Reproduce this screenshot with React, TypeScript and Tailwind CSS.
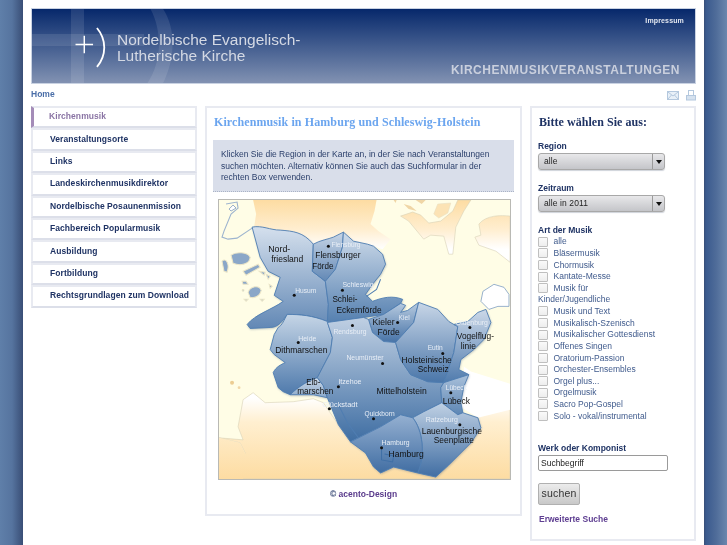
import React from "react";

const nav = ["Kirchenmusik","Veranstaltungsorte","Links","Landeskirchenmusikdirektor","Nordelbische Posaunenmission","Fachbereich Popularmusik","Ausbildung","Fortbildung","Rechtsgrundlagen zum Download"];
const checks: (string | null)[] = ["alle","Bläsermusik","Chormusik","Kantate-Messe","Musik für",null,"Musik und Text","Musikalisch-Szenisch","Musikalischer Gottesdienst","Offenes Singen","Oratorium-Passion","Orchester-Ensembles","Orgel plus...","Orgelmusik","Sacro Pop-Gospel","Solo - vokal/instrumental"];

const black: [string, number, number, number][] = [
  ["Nord-",268,250,22],["friesland",271,260,32],["Flensburger",315,256,45],["Förde",312,267,21],["Schlei-",332,300,25],["Eckernförde",336,311,45],
  ["Kieler",372,323,22],["Förde",377,333,22],["Vogelflug-",456,337,37],["linie",460,346,15],["Dithmarschen",275,350,52],["Elb-",306,382,14],["marschen",297,391,36],
  ["Holsteinische",401,360,50],["Schweiz",417,369,31],["Mittelholstein",376,391,50],["Lübeck",442,401,27],["Lauenburgische",421,431,60],["Seenplatte",433,440,40],["Hamburg",388,454,35],
];
const white: [string, number, number, number][] = [
  ["Flensburg",331,245,29],["Husum",295,291,21],["Schleswig",342,285,31],["Rendsburg",333,332,33],["Heide",298,339,18],["Kiel",398,318,11],["Oldenburg",455,323,32],
  ["Itzehoe",338,382,23],["Glückstadt",322,405,35],["Neumünster",346,358,37],["Eutin",427,348,15],["Lübeck",445,388,21],["Quickborn",364,414,30],["Ratzeburg",425,420,32],["Hamburg",381,443,28],
];
const dots: [number, number][] = [[328,247],[294,296],[342,291],[352,326],[298,343],[397,323],[469,328],[338,387],[329,409],[382,364],[442,354],[450,393],[373,419],[459,425],[381,448]];

const regions: [string, string, string][] = [
  ["M252,228 C262,226 270,231 280,231 C293,232 303,233 313,245 L312,272 L325,282 L328,305 L327,322 C312,316 300,315 287,315 C282,322 278,328 270,328 L250,329 L247,325 C255,315 272,310 283,302 L274,296 L280,278 L268,272 L260,258 Z", "#d5e0ed", "#6288b5"],
  ["M313,245 C320,241 328,240 333,238 L343,233 L342,248 L335,270 L325,282 L312,272 Z", "#c8d6e7", "#6288b5"],
  ["M343,233 L353,242 L367,245 L373,247 L382,255 L385,265 L380,275 L372,285 L365,295 L372,302 C382,298 392,296 402,300 L400,304 L383,315 L363,318 L327,323 L328,305 L325,282 L335,270 L342,248 Z", "#cedbea", "#5580b0"],
  ["M368,320 L383,315 L400,304 L405,306 L400,313 L407,311 L418,303 L413,323 L395,343 L383,342 L372,333 Z", "#b8cbe0", "#4773a7"],
  ["M287,315 C300,315 312,316 327,322 L332,338 L330,353 L317,378 C308,381 298,387 290,395 L283,392 L278,388 L273,373 C276,367 281,365 285,363 L274,355 L270,350 L274,335 L278,328 C282,326 284,320 287,315 Z", "#c5d5e6", "#4f7aac"],
  ["M290,395 C298,387 308,381 317,378 L323,386 L327,398 L313,395 Z", "#ccd9e9", "#8aa9ca"],
  ["M327,323 L363,318 L368,320 L372,333 L383,342 L395,343 L400,360 L410,375 L427,382 L443,383 L440,388 L441,403 L423,412 L412,418 L400,415 L380,427 L358,438 L350,442 L338,425 L327,398 L323,386 L317,378 L330,353 L332,338 Z", "#c0d0e3", "#3f6ea3"],
  ["M418,303 L437,310 L448,322 L453,325 L457,327 L453,353 L443,383 L427,382 L410,375 L400,360 L395,343 L413,323 Z", "#c8d6e7", "#4a76a9"],
  ["M453,325 L467,322 L477,313 L485,310 L490,323 L483,340 L473,350 L460,360 L458,370 L468,375 L443,383 L453,353 L457,327 Z", "#cbd8e8", "#507bad"],
  ["M443,383 L468,375 L463,387 L460,403 L462,413 L457,415 L441,403 L440,388 Z", "#a9c0da", "#5d86b4"],
  ["M412,418 L423,412 L441,403 L457,415 L462,413 L477,418 L480,428 L470,443 L448,465 L435,477 L417,473 C425,455 422,430 412,418 Z", "#c0d1e4", "#416ea3"],
  ["M358,438 L380,427 L400,415 L412,418 C422,430 425,455 417,473 L393,467 L380,473 L373,467 L365,453 L350,442 Z", "#95b0d1", "#416ea3"],
];

function MapArt() {
  return (
    <svg viewBox="219 201 290 278" className="block h-full w-full">
      <defs>
        {regions.map(([, a, b], i) => (
          <linearGradient key={i} id={`r${i}`} x1="0" y1="0" x2="0" y2="1">
            <stop offset="0" stopColor={a} />
            <stop offset="1" stopColor={b} />
          </linearGradient>
        ))}
        <linearGradient id="top" gradientUnits="userSpaceOnUse" x1="0" y1="201" x2="0" y2="250">
          <stop offset="0" stopColor="#fddca2" />
          <stop offset="0.6" stopColor="#ffeed0" />
          <stop offset="1" stopColor="#ffffff" />
        </linearGradient>
        <linearGradient id="bot" gradientUnits="userSpaceOnUse" x1="0" y1="398" x2="0" y2="479">
          <stop offset="0" stopColor="#ffffff" />
          <stop offset="0.3" stopColor="#ffefd0" />
          <stop offset="1" stopColor="#fddca2" />
        </linearGradient>
        <filter id="sh" x="-5%" y="-5%" width="110%" height="110%" colorInterpolationFilters="sRGB">
          <feGaussianBlur stdDeviation="1.3" />
        </filter>
      </defs>
      <rect x="219" y="201" width="290" height="278" fill="#fffde6" />
      <path d="M253,201 L256,215 L254,228 L280,231 L313,245 L333,238 L343,233 L353,242 L367,245 L382,250 L390,240 L378,232 L370,225 L374,212 L376,201 Z" fill="url(#top)" />
      <path d="M400,217 L408,222 L423,240 L430,236 L443,237 L448,255 L452,255 L455,228 L463,212 L470,201 L457,201 L452,212 L440,222 L428,224 L420,216 L412,213 Z" fill="url(#top)" stroke="#d8d2b8" strokeWidth="0.6" />
      <path d="M433,215 L437,205 L450,204 L447,214 L438,219 Z" fill="#fce3b5" stroke="#e5dcc0" strokeWidth="0.5" />
      <path d="M403,205 L410,207 L416,212 L408,210 Z M393,201 L396,201 L395,204 Z M415,201 L425,201 L421,205 Z" fill="#f0d6a6" />
      <path d="M478,225 C485,216 500,216 509,217 L509,263 L495,252 L478,246 L474,238 L480,236 Z" fill="url(#top)" stroke="#d8d2b8" strokeWidth="0.6" />
      <path d="M226,205 L237,203 L238,209 L231,215 L224,232 L222,238 L228,240 L237,239 L252,229" fill="none" stroke="#9db4cf" strokeWidth="1.1" />
      <path d="M233,206 L229,210 L231,212 L236,209 Z" fill="#fff" stroke="#7f9bbd" strokeWidth="0.8" />
      <g fill="#8ba7c8" stroke="#ece6c8" strokeWidth="1">
        <path d="M231,256 C236,252 248,253 250,258 C250,265 240,267 233,264 Z" />
        <path d="M222,262 C226,258 230,265 227,273 L224,272 Z" />
        <path d="M248,293 C250,287 259,285 261,291 C260,297 254,299 250,298 Z" />
        <path d="M243,272 L258,265 L260,268 L246,276 Z" />
        <path d="M242,282 L246,282 L248,285 L243,285 Z" />
        <path d="M259,272 L265,273 L264,276 Z" />
        <path d="M266,275 L270,277 L268,280 Z" />
        <path d="M269,285 L272,287 L270,289 Z" />
        <path d="M244,300 L248,300 L246,302 Z" />
        <path d="M260,300 L264,300 L262,302 Z" />
        <circle cx="243" cy="291" r="0.9" />
      </g>
      <path d="M480,302 L482,292 L493,285 L503,288 L508,295 L508,307 L497,307 L488,310 Z" fill="url(#top)" stroke="#7f9fc2" strokeWidth="0.8" />
      <path d="M219,438 L240,443 L245,453 L238,470 L237,479 L509,479 L509,405 L480,415 L477,418 L480,428 L470,443 L448,465 L435,477 L417,473 L393,467 L380,473 L373,467 L365,453 L350,442 L338,425 L323,403 L313,399 L293,402 L265,403 L253,393 L243,400 L238,427 L243,440 Z" fill="url(#bot)" stroke="#d8d2b8" strokeWidth="0.6" />
      <path d="M463,367 L470,372 L490,378 L509,384 L509,410 L477,418 L460,407 L463,387 Z" fill="#ffffff" />
      <path d="M219,438 L240,443 L245,453 L243,479 L219,479 Z" fill="url(#bot)" />
      <circle cx="232" cy="383" r="2" fill="#eccd93" />
      <circle cx="239" cy="388" r="1.4" fill="#f1d7a6" />
      <path d={regions.map((r) => r[0]).join(" ")} fill="#5b6f88" opacity="0.45" filter="url(#sh)" transform="translate(0.6,1)" />
      {regions.map(([d], i) => (
        <path key={i} d={d} fill={`url(#r${i})`} stroke="#4f7db1" strokeWidth="0.9" strokeLinejoin="round" />
      ))}
      <path d="M366,297 L376,290 L380,280 M337,403 L347,423 L358,438" stroke="#4f7db1" strokeWidth="1" fill="none" />
      <path d="M381,450 L381,460 L392,462 L393,456 L384,454" stroke="#3f6fa6" strokeWidth="1" fill="none" />
      {dots.map(([x, y], i) => (
        <circle key={i} cx={x} cy={y} r="1.5" fill="#111" />
      ))}
      {white.map(([t, x, y, w], i) => (
        <text key={i} x={x} y={y + 2.5} fontSize="7" fill="#e8eef6" textLength={w} lengthAdjust="spacingAndGlyphs" fontFamily="'Liberation Sans', sans-serif">{t}</text>
      ))}
      {black.map(([t, x, y, w], i) => (
        <text key={i} x={x} y={y + 3} fontSize="8.5" fill="#111" textLength={w} lengthAdjust="spacingAndGlyphs" fontFamily="'Liberation Sans', sans-serif">{t}</text>
      ))}
    </svg>
  );
}

function Select({ value }: { value: string }) {
  return (
    <div className="flex h-[17px] w-[127px] rounded-[3px] border border-[#a8a8a8] bg-gradient-to-b from-[#e8e8ea] to-[#c4c5c9] text-[8.5px] leading-[15px] text-[#222] shadow-[0_1px_1px_#cfd3da]">
      <span className="flex-1 pl-[5px] tracking-[0.1px]">{value}</span>
      <span className="flex w-[12px] items-center justify-center border-l border-[#9a9a9a]">
        <span className="h-0 w-0 border-x-[3.5px] border-t-[4px] border-x-transparent border-t-[#111]" />
      </span>
    </div>
  );
}

export default function App() {
  return (
    <div className="h-[545px] w-[727px] overflow-hidden bg-[linear-gradient(90deg,#5f7fa9_0px,#56749f_12px,#394e76_23px,#394e76_704px,#3a5a8e_706px,#4f6c99_716px,#6a86ad_727px)] font-['Liberation_Sans',Arial,sans-serif]">
      <div className="mx-[23px] h-full w-[681px] bg-white px-[8px] pt-[8px] blur-[0.3px]">
        <div className="relative h-[76px] overflow-hidden border border-[#c9d2e2] bg-gradient-to-b from-[#06286b] to-[#8292b2]">
          <div className="absolute left-[39px] top-0 h-full w-[13px] bg-white/10" />
          <div className="absolute left-0 top-[25px] h-[12px] w-[112px] bg-white/10" />
          <svg className="absolute left-0 top-0 h-full w-[200px]" viewBox="0 0 200 76">
            <path d="M119,0 C132,25 130,55 116,76 L132,76 C145,50 145,20 132,0 Z" fill="#ffffff" fillOpacity="0.1" />
            <path d="M42,36.5 L60,36.5 M51,27.5 L51,45.5" stroke="#fff" strokeWidth="1.5" fill="none" />
            <path d="M64,20 C74,32 74,48 64,60" transform="translate(0,-0.5)" stroke="#fff" strokeWidth="1.9" fill="none" />
          </svg>
          <div className="absolute left-[85px] top-[23px] text-[15.5px] leading-[15.5px] text-[#d4d9e4]">
            <div>Nordelbische Evangelisch-</div>
            <div>Lutherische Kirche</div>
          </div>
          <div className="absolute right-[11px] top-[7px] text-[7px] font-bold tracking-[0.15px] text-[#e4e8f0]">Impressum</div>
          <div className="absolute right-[15px] top-[52px] text-[12px] font-bold tracking-[0.5px] text-[#c9cfdd]">KIRCHENMUSIKVERANSTALTUNGEN</div>
        </div>
        <div className="flex h-[22px] items-center justify-between">
          <span className="pb-[1px] text-[8.5px] font-bold text-[#4a6ea8]">Home</span>
          <span className="flex items-center gap-[7px] pt-[1px]">
            <svg width="12" height="9" viewBox="0 0 12 9" fill="none"><rect x="0.5" y="0.5" width="11" height="8" fill="#e8f0f8" stroke="#b4c8de" /><path d="M1,1 L6,5 L11,1 M1,8 L4.5,4 M11,8 L7.5,4" stroke="#b4c8de" /></svg>
            <svg width="10" height="11" viewBox="0 0 10 11" fill="none"><rect x="2.5" y="0.5" width="5" height="5" fill="#fff" stroke="#b4c8de" /><rect x="0.5" y="5.5" width="9" height="4.5" fill="#d6e2ef" stroke="#b4c8de" /></svg>
          </span>
        </div>
        <div className="flex items-start gap-[8px]">
          <div className="flex w-[166px] flex-col">
            {nav.map((n, i) => (
              <div key={n} className={`flex h-[22.4px] items-center whitespace-nowrap border-2 border-[#e8eaf1] border-b-[#dcdfe9] pb-[1px] text-[8.5px] font-bold tracking-[0.07px] ${i === 0 ? "border-l-[3px] border-l-[#a48cb8] pl-[15px] text-[#8a74a4]" : "pl-[17px] text-[#1f3364]"}`}>{n}</div>
            ))}
          </div>
          <div className="h-[410px] w-[317px] border-2 border-[#e8eaf1] px-[6px]">
            <h1 className="mt-[7px] h-[14px] pl-[1px] font-['Liberation_Serif',serif] text-[12px] leading-[14px] font-bold tracking-[0.1px] text-[#6ba5ef]">Kirchenmusik in Hamburg und Schleswig-Holstein</h1>
            <div className="mt-[11px] h-[52px] border-b border-dotted border-[#aab3c6] bg-[#d9deea] px-[8px] pt-[9px] text-[8.5px] leading-[11.7px] text-[#2a3e6a]">
              Klicken Sie die Region in der Karte an, in der Sie nach Veranstaltungen suchen möchten. Alternativ können Sie auch das Suchformular in der rechten Box verwenden.
            </div>
            <div className="mx-[5px] mt-[7px] h-[281px] w-[293px] border border-[#b9b9b4]">
              <MapArt />
            </div>
            <div className="mt-[8px] text-center text-[8.5px] font-bold text-[#5a3b8c]"><span className="text-[#1f3364]">©</span> acento-Design</div>
          </div>
          <div className="h-[435px] w-[166px] border-2 border-[#e8eaf1] pl-[6px]">
            <h2 className="mt-[7px] h-[14px] pl-[1px] font-['Liberation_Serif',serif] text-[12px] leading-[14px] font-bold tracking-[0.05px] text-[#1f3364]">Bitte wählen Sie aus:</h2>
            <div className="mt-[12px] mb-[1px] text-[8.5px] leading-[11px] font-bold text-[#1f3364]">Region</div>
            <Select value="alle" />
            <div className="mt-[13px] mb-[1px] text-[8.5px] leading-[11px] font-bold text-[#1f3364]">Zeitraum</div>
            <Select value="alle in 2011" />
            <div className="mt-[13px] text-[8.5px] leading-[11px] font-bold text-[#1f3364]">Art der Musik</div>
            <div className="flex flex-col">
              {checks.map((c, i) =>
                c === null ? (
                  <div key={i} className="h-[11.62px] text-[8.5px] leading-[11.62px] text-[#3f5a8c]">Kinder/Jugendliche</div>
                ) : (
                  <div key={i} className="flex h-[11.62px] items-center gap-[5.5px] text-[8.5px] text-[#3f5a8c]">
                    <span className="h-[10px] w-[10px] shrink-0 rounded-[1px] border border-[#bfbfbf] bg-gradient-to-b from-[#fafafa] to-[#eeeeee]" />
                    <span>{c}</span>
                  </div>
                )
              )}
            </div>
            <div className="mt-[21px] mb-[1px] text-[8.5px] leading-[11px] font-bold text-[#1f3364]">Werk oder Komponist</div>
            <div className="h-[16px] w-[130px] rounded-[2px] border border-[#9a9a9a] pl-[2px] text-[8.5px] leading-[14px] text-[#222]">Suchbegriff</div>
            <button className="mt-[12px] block h-[22px] w-[42px] rounded-[2px] border border-[#b0b0b0] bg-gradient-to-b from-[#ececec] to-[#c8c8c8] text-[10.5px] tracking-[0.2px] text-[#333]">suchen</button>
            <div className="mt-[9px] pl-[1px] text-[8.5px] leading-[10px] font-bold text-[#5f3f92]">Erweiterte Suche</div>
          </div>
        </div>
      </div>
    </div>
  );
}
